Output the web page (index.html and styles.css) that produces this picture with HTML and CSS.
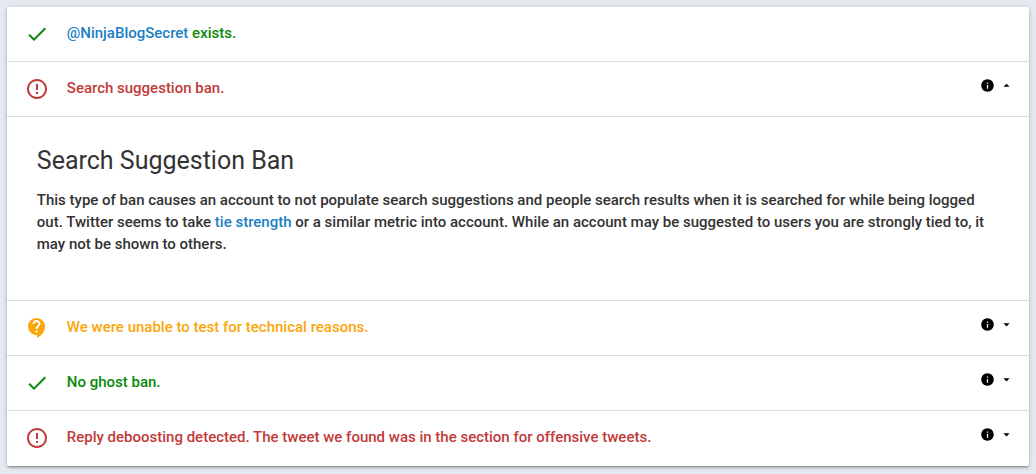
FILE: index.html
```html
<!DOCTYPE html>
<html lang="en">
<head>
    <meta charset="UTF-8">
    <meta name="viewport" content="width=device-width, initial-scale=1.0">
    <title>Search Suggestion Ban</title>
    <link rel="stylesheet" href="styles.css">
</head>
<body>
    <svg class="sprite">
        <symbol id="check" viewBox="0 0 24 24"><path d="M9 16.17L4.83 12l-1.42 1.41L9 19 21 7l-1.41-1.41z"/></symbol>
        <symbol id="error" viewBox="0 0 24 24"><path d="M11 15h2v2h-2zm0-8h2v6h-2zm.99-5C6.47 2 2 6.48 2 12s4.47 10 9.99 10C17.52 22 22 17.52 22 12S17.52 2 11.99 2zM12 20c-4.42 0-8-3.58-8-8s3.58-8 8-8 8 3.58 8 8-3.58 8-8 8z"/></symbol>
        <symbol id="support" viewBox="0 0 24 24"><path d="M11.5 2C6.81 2 3 5.81 3 10.5S6.81 19 11.5 19h.5v3c4.86-2.34 8-7 8-11.5C20 5.81 16.19 2 11.5 2zm1 14.5h-2v-2h2v2zm0-3.5h-2c0-3.25 3-3 3-5 0-1.1-.9-2-2-2s-2 .9-2 2h-2c0-2.21 1.79-4 4-4s4 1.79 4 4c0 2.5-3 2.75-3 5z"/></symbol>
        <symbol id="info" viewBox="0 0 24 24"><path d="M12 2C6.48 2 2 6.48 2 12s4.48 10 10 10 10-4.48 10-10S17.52 2 12 2zm1 15h-2v-6h2v6zm0-8h-2V7h2v2z"/></symbol>
        <symbol id="down" viewBox="0 0 24 24"><path d="M7 10l5 5 5-5z"/></symbol>
        <symbol id="up" viewBox="0 0 24 24"><path d="M7 14l5-5 5 5z"/></symbol>
    </svg>

    <ul class="collapsible">
        <li>
            <div class="header passed">
                <svg class="icon"><use href="#check"/></svg>
                <span class="status"><a href="#">@NinjaBlogSecret</a> exists.</span>
            </div>
        </li>
        <li class="active">
            <div class="header failed">
                <svg class="icon"><use href="#error"/></svg>
                <span class="status">Search suggestion ban.</span>
                <span class="toggle"><svg><use href="#info"/></svg><svg><use href="#up"/></svg></span>
            </div>
            <div class="body">
                <h5>Search Suggestion Ban</h5>
                <p>This type of ban causes an account to not populate search suggestions and people search results when it is searched for while being logged out. Twitter seems to take <a href="#">tie strength</a> or a similar metric into account. While an account may be suggested to users you are strongly tied to, it may not be shown to others.</p>
            </div>
        </li>
        <li>
            <div class="header unknown">
                <svg class="icon"><use href="#support"/></svg>
                <span class="status">We were unable to test for technical reasons.</span>
                <span class="toggle"><svg><use href="#info"/></svg><svg><use href="#down"/></svg></span>
            </div>
        </li>
        <li>
            <div class="header passed">
                <svg class="icon"><use href="#check"/></svg>
                <span class="status">No ghost ban.</span>
                <span class="toggle"><svg><use href="#info"/></svg><svg><use href="#down"/></svg></span>
            </div>
        </li>
        <li>
            <div class="header failed">
                <svg class="icon"><use href="#error"/></svg>
                <span class="status">Reply deboosting detected. The tweet we found was in the section for offensive tweets.</span>
                <span class="toggle"><svg><use href="#info"/></svg><svg><use href="#down"/></svg></span>
            </div>
        </li>
    </ul>
</body>
</html>
```
FILE: styles.css
```css
* {
    box-sizing: border-box;
}
body {
    margin: 0;
    padding: 7px;
    background-color: #e4eaf0;
    font-family: Roboto, sans-serif;
    font-size: 15px;
    font-weight: 500;
    line-height: 22px;
    color: #333;
}
.sprite {
    display: none;
}
svg {
    fill: currentColor;
}
a {
    color: #1b7fc4;
    text-decoration: none;
}
.collapsible {
    margin: 0;
    padding: 0;
    list-style: none;
    background-color: #fff;
    border-radius: 2px;
    box-shadow: 0 2px 2px 0 rgba(0, 0, 0, 0.14), 0 3px 1px -2px rgba(0, 0, 0, 0.12), 0 1px 5px 0 rgba(0, 0, 0, 0.2);
}
.header {
    display: flex;
    height: 55px;
    padding: 15px 15px 0 17.5px;
    border-bottom: 1px solid #ddd;
}
.collapsible li:last-child .header {
    border-bottom: none;
}
.icon {
    width: 24px;
    height: 24px;
    margin-right: 18.3px;
}
.status {
    flex: 1;
}
.toggle {
    display: flex;
    gap: 4px;
    padding-top: 1px;
    color: #000;
}
.toggle svg {
    width: 15px;
    height: 15px;
}
.passed {
    color: #0a8a0a;
}
.failed {
    color: #c13a3a;
}
.unknown {
    color: #fba60a;
}
.body {
    height: 184px;
    padding: 29px 30px 0 29.8px;
    border-bottom: 1px solid #ddd;
}
.body h5 {
    margin: 0 0 14px;
    font-size: 25px;
    font-weight: 400;
    line-height: 29px;
}
.body p {
    margin: 0;
}
```
